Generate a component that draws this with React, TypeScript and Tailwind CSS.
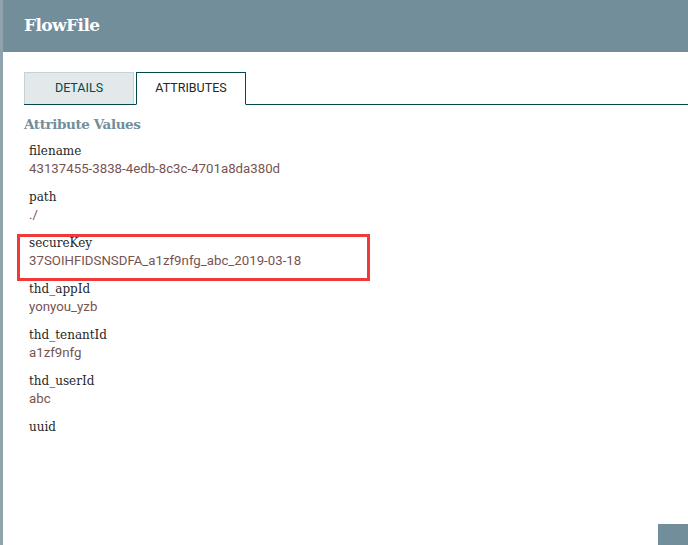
import React from 'react';

const attrs = [
  { name: 'filename', value: '43137455-3838-4edb-8c3c-4701a8da380d' },
  { name: 'path', value: './' },
  { name: 'secureKey', value: '37SOIHFIDSNSDFA_a1zf9nfg_abc_2019-03-18' },
  { name: 'thd_appId', value: 'yonyou_yzb' },
  { name: 'thd_tenantId', value: 'a1zf9nfg' },
  { name: 'thd_userId', value: 'abc' },
  { name: 'uuid', value: '43137455-3838-4edb-8c3c-4701a8da380d' },
];

const serif = { fontFamily: '"DejaVu Serif", serif' };
const sans = { fontFamily: 'Roboto, sans-serif' };

const App: React.FC = () => {
  return (
    <div className="flex w-[688px] h-[545px] bg-white overflow-hidden">
      <div className="w-[3px] shrink-0 bg-[#8fa3ad]" />
      <div className="relative flex-1 flex flex-col">
        <div className="h-[52px] shrink-0 bg-[#728e9b] flex items-center px-[21px]">
          <h1 style={serif} className="text-white font-bold text-[17px] tracking-[-0.6px]">FlowFile</h1>
        </div>

        <div className="pl-[21px] pt-[20px]">
          <div className="flex items-end border-b border-[#004849] h-[33px]">
            <div
              style={sans}
              className="w-[110px] h-[32px] flex items-center justify-center bg-[#e3e8eb] border border-[#c7d2d7] border-b-0 text-[12.5px] text-[#004849] uppercase"
            >
              Details
            </div>
            <div
              style={sans}
              className="ml-[2px] w-[110px] h-[33px] -mb-px flex items-center justify-center bg-white border border-[#004849] border-b-white text-[12.5px] text-[#262626] uppercase"
            >
              Attributes
            </div>
          </div>

          <h2 style={serif} className="mt-[10px] text-[13.5px] font-bold tracking-[-0.4px] text-[#728e9b] leading-[18px]">
            Attribute Values
          </h2>

          {/* list is scrolled/clipped in the dialog, uuid value barely peeks in */}
          <div className="relative mt-[10px] h-[296px] overflow-hidden pl-[5px]">
            <div className="flex flex-col gap-[12px]">
              {attrs.map((a) => (
                <div key={a.name} className="flex flex-col">
                  <div style={serif} className="text-[12px] leading-[17px] text-[#262626]">{a.name}</div>
                  <div style={sans} className="text-[13.25px] leading-[17px] text-[#775351]">{a.value}</div>
                </div>
              ))}
            </div>
          </div>
        </div>

        <div className="absolute left-[14px] top-[234px] w-[353px] h-[47px] border-[3px] border-[#ef3a3a] pointer-events-none" />
        <div className="absolute right-0 bottom-0 w-[30px] h-[21px] bg-[#728e9b]" />
      </div>
    </div>
  );
};

export default App;
